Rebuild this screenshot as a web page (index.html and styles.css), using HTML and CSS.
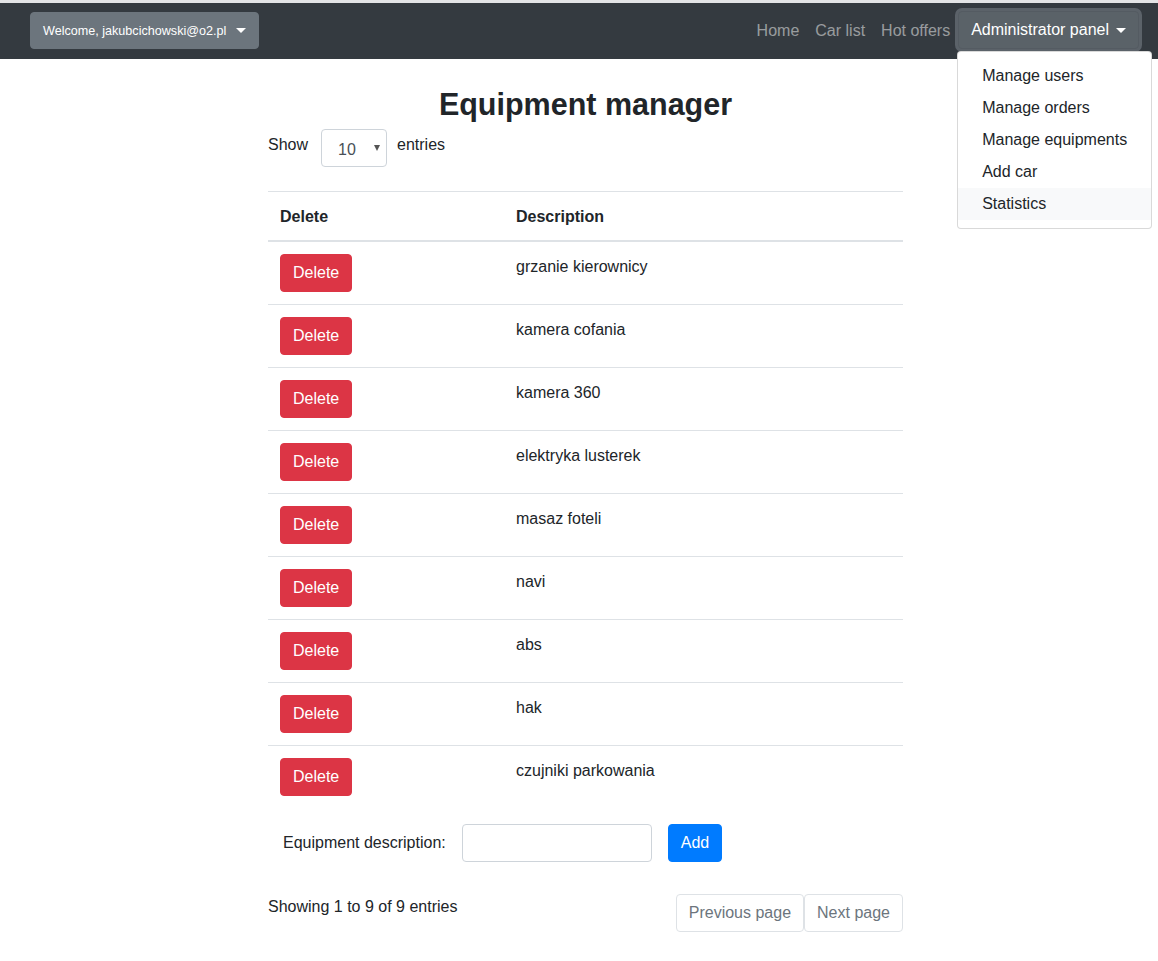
FILE: index.html
```html
<!DOCTYPE html>
<html lang="en">
<head>
<meta charset="utf-8">
<title>Equipment manager</title>
<link rel="stylesheet" href="styles.css">
</head>
<body>
<nav class="navbar">
  <button class="btn btn-welcome">Welcome, jakubcichowski@o2.pl<span class="caret"></span></button>
  <div class="nav-right">
    <a class="nav-link" href="#">Home</a>
    <a class="nav-link" href="#">Car list</a>
    <a class="nav-link" href="#">Hot offers</a>
    <div class="dropdown">
      <button class="btn btn-admin">Administrator panel<span class="caret"></span></button>
      <div class="dropdown-menu">
        <a class="dropdown-item" href="#">Manage users</a>
        <a class="dropdown-item" href="#">Manage orders</a>
        <a class="dropdown-item" href="#">Manage equipments</a>
        <a class="dropdown-item" href="#">Add car</a>
        <a class="dropdown-item hover" href="#">Statistics</a>
      </div>
    </div>
  </div>
</nav>

<main class="content">
  <h2 class="title">Equipment manager</h2>
  <div class="length-row">
    <span class="length-label">Show</span>
    <div class="select"><span class="select-value">10</span><span class="select-arrow"></span></div>
    <span class="length-label entries">entries</span>
  </div>

  <table class="table">
    <thead>
      <tr><th class="col-del">Delete</th><th>Description</th></tr>
    </thead>
    <tbody>
      <tr><td><button class="btn btn-danger">Delete</button></td><td>grzanie kierownicy</td></tr>
      <tr><td><button class="btn btn-danger">Delete</button></td><td>kamera cofania</td></tr>
      <tr><td><button class="btn btn-danger">Delete</button></td><td>kamera 360</td></tr>
      <tr><td><button class="btn btn-danger">Delete</button></td><td>elektryka lusterek</td></tr>
      <tr><td><button class="btn btn-danger">Delete</button></td><td>masaz foteli</td></tr>
      <tr><td><button class="btn btn-danger">Delete</button></td><td>navi</td></tr>
      <tr><td><button class="btn btn-danger">Delete</button></td><td>abs</td></tr>
      <tr><td><button class="btn btn-danger">Delete</button></td><td>hak</td></tr>
      <tr><td><button class="btn btn-danger">Delete</button></td><td>czujniki parkowania</td></tr>
    </tbody>
  </table>

  <form class="add-form">
    <label class="add-label">Equipment description:</label>
    <input class="add-input" type="text">
    <button class="btn btn-primary" type="button">Add</button>
  </form>

  <div class="footer-row">
    <div class="info">Showing 1 to 9 of 9 entries</div>
    <div class="pager">
      <span class="page-btn">Previous page</span>
      <span class="page-btn">Next page</span>
    </div>
  </div>
</main>
</body>
</html>
```

FILE: styles.css
```css
* { box-sizing: border-box; }

html, body {
  margin: 0;
  background: #fff;
}

body {
  font-family: "Liberation Sans", Arial, sans-serif;
  font-size: 16px;
  line-height: 1.5;
  color: #212529;
  border-top: 3px solid #e3e4e6;
}

.btn {
  font-family: inherit;
  font-size: 16px;
  line-height: 24px;
  padding: 6px 12px;
  border: 1px solid transparent;
  border-radius: 4px;
  color: #fff;
  cursor: pointer;
  display: inline-flex;
  align-items: center;
}

.caret {
  display: inline-block;
  margin-left: 7px;
  width: 0;
  height: 0;
  border-top: 5px solid currentColor;
  border-left: 5px solid transparent;
  border-right: 5px solid transparent;
}

/* Navbar */
.navbar {
  height: 56px;
  background: #343a40;
  display: flex;
  align-items: center;
  justify-content: space-between;
  padding: 0 19px 0 30px;
}

.btn-welcome {
  background: #6c757d;
  border-color: #6c757d;
  font-size: 12.6px;
  height: 37px;
  padding: 0 12px 0 12px;
  margin-top: -1px;
}

.btn-welcome .caret { margin-left: 10px; }

.nav-right {
  display: flex;
  align-items: center;
}

.nav-link {
  color: rgba(255, 255, 255, 0.5);
  text-decoration: none;
  padding: 8px 8px;
  line-height: 24px;
}

.dropdown {
  position: relative;
}

.btn-admin {
  background: #5a6268;
  border-color: #545b62;
  box-shadow: 0 0 0 3px rgba(130, 138, 145, 0.5);
  height: 38px;
  margin-top: -2px;
}

.dropdown-menu {
  position: absolute;
  top: calc(100% + 2px);
  left: -1px;
  z-index: 10;
  background: #fff;
  border: 1px solid rgba(0, 0, 0, 0.15);
  border-radius: 4px;
  padding: 8px 0;
  min-width: 160px;
  white-space: nowrap;
}

.dropdown-item {
  display: block;
  padding: 4px 24px;
  line-height: 24px;
  color: #212529;
  text-decoration: none;
}

.dropdown-item.hover {
  background: #f8f9fa;
}

/* Content */
.content {
  width: 635px;
  margin-left: 268px;
}

.title {
  text-align: center;
  font-size: 30.5px;
  font-weight: bold;
  line-height: 38px;
  margin: 26px 0 6px;
}

.length-row {
  display: flex;
  align-items: flex-start;
}

.length-label {
  margin-top: 4px;
  line-height: 24px;
}

.select {
  width: 66px;
  height: 38px;
  margin-left: 13px;
  border: 1px solid #ced4da;
  border-radius: 4px;
  display: flex;
  align-items: center;
  justify-content: space-between;
  padding: 4px 6px 0 16px;
  color: #495057;
}

.select-arrow {
  width: 0;
  height: 0;
  border-top: 6px solid #555;
  border-left: 3.5px solid transparent;
  border-right: 3.5px solid transparent;
  margin-top: -5px;
}

.entries { margin-left: 10px; }

.table {
  width: 635px;
  border-collapse: collapse;
  margin: 24px 0 16px;
}

.table th,
.table td {
  padding: 12px;
  text-align: left;
  vertical-align: top;
  border-top: 1px solid #dee2e6;
}

.table td {
  padding-top: 13px;
  padding-bottom: 11px;
}

.table td:first-child {
  padding-top: 12px;
  padding-bottom: 12px;
}

.table thead th {
  border-bottom: 2px solid #dee2e6;
  font-weight: bold;
  padding-top: 13px;
  padding-bottom: 11px;
}

.table tbody tr:first-child td {
  border-top: none;
}

.col-del { width: 236px; }

.btn-danger {
  background: #dc3545;
  border-color: #dc3545;
}

.btn-primary {
  background: #007bff;
  border-color: #007bff;
}

.add-form {
  display: flex;
  align-items: center;
  padding-left: 15px;
  margin: 0;
}

.add-label {
  margin-right: 16px;
}

.add-input {
  width: 190px;
  height: 38px;
  border: 1px solid #ced4da;
  border-radius: 4px;
  margin-right: 16px;
  font-family: inherit;
  font-size: 16px;
}

.footer-row {
  display: flex;
  justify-content: space-between;
  align-items: flex-start;
  margin-top: 32px;
}

.info {
  padding-top: 1px;
}

.pager {
  display: flex;
}

.page-btn {
  height: 38px;
  padding: 0 12px;
  display: flex;
  align-items: center;
  border: 1px solid #dee2e6;
  border-radius: 4px;
  color: #6c757d;
}
```
